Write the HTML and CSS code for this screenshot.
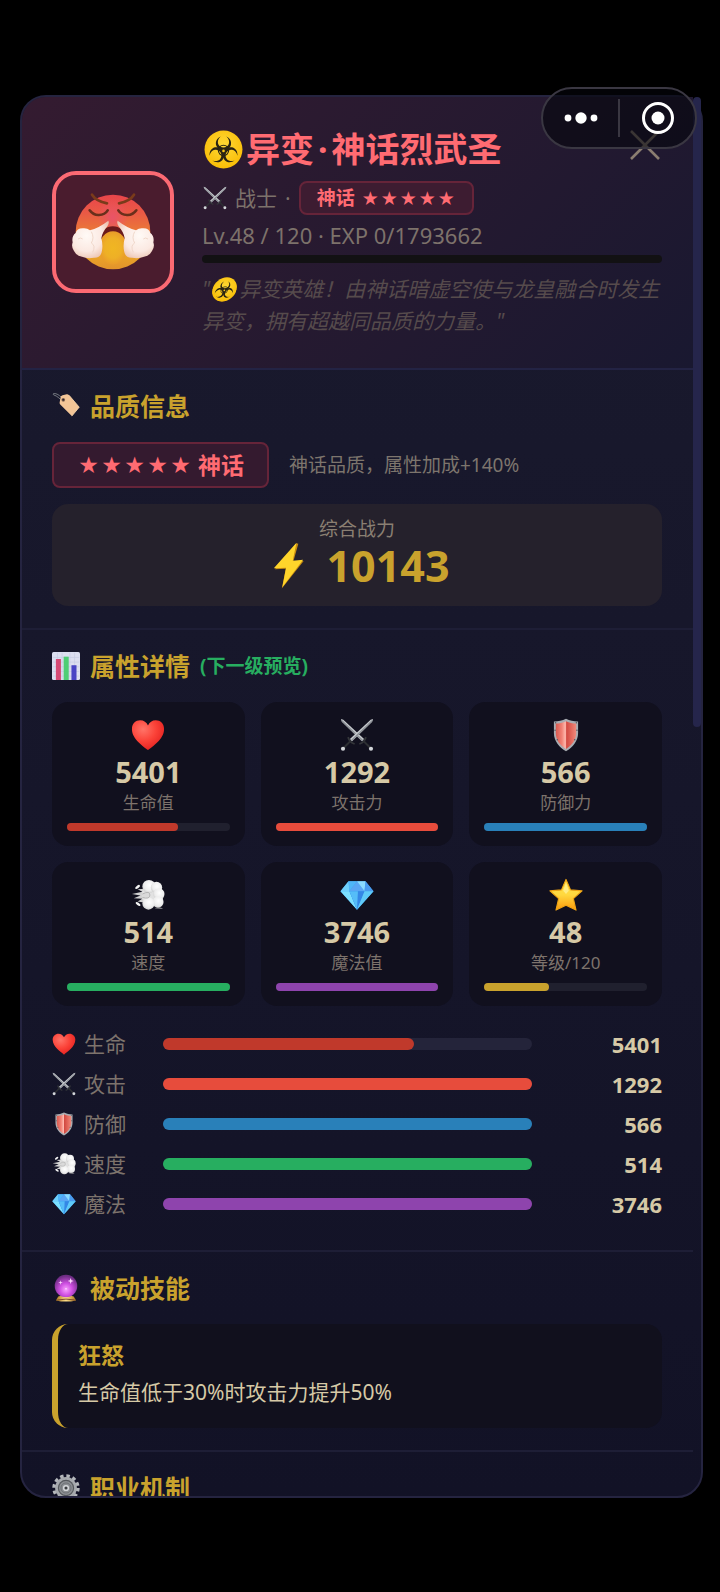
FILE: index.html
```html
<!DOCTYPE html>
<html lang="zh-CN">
<head>
  <meta charset="UTF-8">
  <meta name="viewport" content="width=device-width, initial-scale=1.0">
  <title>异变·神话烈武圣</title>
  <link rel="stylesheet" href="styles.css">
</head>
<body>
  <!-- icon sprites -->
  <svg class="sprites" aria-hidden="true">
    <defs>
      <radialGradient id="g-heart" cx="0.35" cy="0.3" r="0.8">
        <stop offset="0" stop-color="#ff7468"/><stop offset="0.5" stop-color="#fb4238"/><stop offset="1" stop-color="#e01c1c"/>
      </radialGradient>
      <linearGradient id="g-shield" x1="0" x2="1" y1="0" y2="0">
        <stop offset="0" stop-color="#d8594f"/><stop offset="0.3" stop-color="#f28377"/><stop offset="0.47" stop-color="#ffb9ae"/><stop offset="0.53" stop-color="#d24a42"/><stop offset="0.75" stop-color="#e2665a"/><stop offset="1" stop-color="#f08a7c"/>
      </linearGradient>
      <linearGradient id="g-star" x1="0" x2="0" y1="0" y2="1">
        <stop offset="0" stop-color="#ffe04a"/><stop offset="0.5" stop-color="#ffd83f"/><stop offset="1" stop-color="#fb9a0c"/>
      </linearGradient>
      <radialGradient id="g-cloud" cx="0.55" cy="0.4" r="0.6">
        <stop offset="0" stop-color="#ffffff"/><stop offset="0.7" stop-color="#ededed"/><stop offset="1" stop-color="#d2d2d2"/>
      </radialGradient>
      <radialGradient id="g-orb" cx="0.5" cy="0.65" r="0.6">
        <stop offset="0" stop-color="#f9a0ff"/><stop offset="0.45" stop-color="#cf4fe2"/><stop offset="1" stop-color="#6d2d83"/>
      </radialGradient>
      <radialGradient id="g-bio" cx="0.5" cy="0.4" r="0.6">
        <stop offset="0" stop-color="#ffd936"/><stop offset="1" stop-color="#f9bd07"/>
      </radialGradient>
      <linearGradient id="g-face" x1="0" x2="0" y1="0" y2="1">
        <stop offset="0" stop-color="#e8454b"/><stop offset="0.25" stop-color="#ea5a45"/><stop offset="0.55" stop-color="#ea8034"/><stop offset="0.8" stop-color="#eba527"/><stop offset="1" stop-color="#e2932c"/>
      </linearGradient>
      <radialGradient id="g-nose" cx="0.5" cy="0.5" r="0.5">
        <stop offset="0" stop-color="#ea5368"/><stop offset="1" stop-color="#ea5368" stop-opacity="0"/>
      </radialGradient>
      <radialGradient id="g-chin" cx="0.5" cy="0.5" r="0.5">
        <stop offset="0" stop-color="#f0b622"/><stop offset="0.6" stop-color="#eeb026"/><stop offset="1" stop-color="#e99b2a"/>
      </radialGradient>
      <radialGradient id="g-puff" cx="0.4" cy="0.4" r="0.7">
        <stop offset="0" stop-color="#fffaf6"/><stop offset="0.6" stop-color="#fbe9e2"/><stop offset="1" stop-color="#e9bda8"/>
      </radialGradient>
      <linearGradient id="g-gold" x1="0" x2="1" y1="0" y2="0">
        <stop offset="0" stop-color="#a8741c"/><stop offset="0.5" stop-color="#ffe08a"/><stop offset="1" stop-color="#a8741c"/>
      </linearGradient>
    </defs>
    <symbol id="i-heart" viewBox="0 0 36 36">
      <path d="M18 34C14 30.500 1 22.500 1 11.800C1 6 5 2.500 9.700 2.500C13.500 2.500 16.600 4.700 18 8C19.400 4.700 22.500 2.500 26.300 2.500C31 2.500 35 6 35 11.800C35 22.500 22 30.500 18 34Z" fill="url(#g-heart)"/>
    </symbol>
    <symbol id="i-swords" viewBox="0 0 36 36">
      <g id="sword">
        <path d="M1 1L3.500 1.800L25.500 22.300L23.300 24.600L2 4Z" fill="#c9ccd0"/>
        <path d="M1 1L24.400 23.400L23.300 24.600L2 4Z" fill="#8c9096"/>
        <path d="M20.500 27.500Q24.500 26 25 24.800Q26.500 23 27.500 20.200" fill="none" stroke="#34363a" stroke-width="1.900"/>
        <path d="M25 24.500L32 31.500" stroke="#2d2f33" stroke-width="2.200"/>
        <circle cx="32.800" cy="32.600" r="2.200" fill="#d3d6da"/>
      </g>
      <use href="#sword" transform="matrix(-1 0 0 1 36 0)"/>
    </symbol>
    <symbol id="i-shield" viewBox="0 0 36 36">
      <path d="M18 .8C22 2.600 26 3.600 30.800 3.600V16C30.800 24.500 25 31.500 18 35.200C11 31.500 5.200 24.500 5.200 16V3.600C10 3.600 14 2.600 18 .8Z" fill="#a9adb2"/>
      <path d="M18 3.400C21.500 5 25 5.800 28.800 5.900V16C28.800 23.400 24 29.500 18 32.800C12 29.500 7.200 23.400 7.200 16V5.900C11 5.800 14.500 5 18 3.400Z" fill="url(#g-shield)"/>
      <g fill="#55585d"><circle cx="7" cy="5" r=".8"/><circle cx="29" cy="5" r=".8"/><circle cx="6.400" cy="13" r=".8"/><circle cx="29.600" cy="13" r=".8"/><circle cx="8.800" cy="23" r=".8"/><circle cx="27.200" cy="23" r=".8"/></g>
    </symbol>
    <symbol id="i-dash" viewBox="0 0 36 36">
      <path d="M19 11L7 12L12 14.500L1 17L10 18.500L3 21.500L12 22L7 25L17 26.500Z" fill="#d2d2d2"/>
      <ellipse cx="7" cy="9.500" rx="3" ry="1.400" transform="rotate(-38 7 9.500)" fill="#f4f4f4"/>
      <ellipse cx="7.500" cy="27.500" rx="3" ry="1.400" transform="rotate(36 7.500 27.500)" fill="#f4f4f4"/>
      <circle cx="23" cy="18" r="11.500" fill="#e2e2e2"/>
      <g fill="url(#g-cloud)"><circle cx="19" cy="9" r="7"/><circle cx="27" cy="10" r="6"/><circle cx="29.500" cy="17" r="6"/><circle cx="28.500" cy="25.500" r="6"/><circle cx="18.500" cy="27" r="6.500"/></g>
      <path d="M12 17Q20 13 20 18Q20 23 12 20.500" fill="#dadada" stroke="#b3b3b3" stroke-width="1"/>
      <path d="M25 32Q30 30 34 32.500Z" fill="#b5b5b5"/>
    </symbol>
    <symbol id="i-gem" viewBox="0 0 36 36">
      <path d="M9 3.500H27L35.500 14L18 33.500L.5 14Z" fill="#3b9ff0"/>
      <path d="M9 3.500L.5 14H10Z" fill="#6fd0fb"/><path d="M9 3.500L10 14L18 3.500Z" fill="#4fb6f8"/><path d="M18 3.500L10 14H26Z" fill="#5aa6f4"/>
      <path d="M18 3.500L26 14L27 3.500Z" fill="#8bdcff"/><path d="M27 3.500L26 14H35.500Z" fill="#4a9bee"/>
      <path d="M.5 14H10L18 33.500Z" fill="#7be0ff"/><path d="M10 14H26L18 33.500Z" fill="#3487e6"/><path d="M10 14H19L18 33.500Z" fill="#55bdf8"/><path d="M26 14H35.500L18 33.500Z" fill="#5fcaf9"/>
    </symbol>
    <symbol id="i-star" viewBox="0 0 36 36">
      <path d="M18 1.500L22.800 12.600L35 13.700L25.800 21.800L28.600 34L18 28.800L7.400 34L10.200 21.800L1 13.700L13.200 12.600Z" fill="url(#g-star)" stroke="#f0a413" stroke-width="1.200" stroke-linejoin="round"/>
      <path d="M18 5L21 13.500L18 17L15 13.500Z" fill="#fff3a0" opacity=".7"/>
    </symbol>
    <symbol id="i-bolt" viewBox="0 0 36 36">
      <path d="M23.600 1L7.400 20.400L15.600 20L12.600 34.800L29 14.200L21.200 14.800L25 1.400Z" fill="#c58a12"/>
      <path d="M23.600 .6L6.600 19.600L15.800 19.400L13 34L28.600 13.400L20.800 14Z" fill="#ffd52b"/>
    </symbol>
    <symbol id="i-tag" viewBox="0 0 36 36">
      <path d="M13 11C9 8 7 5.500 2.500 3.800C0 2.600 2 1.400 5 2.200C9 3.400 11 6 14 9" fill="none" stroke="#7c8087" stroke-width="1.200"/>
      <path d="M11 7.500Q10.500 5 13.500 4.200L19 3Q20.500 2.800 22 4.300L35 19.500L25.500 31L10.600 16.200Q9.500 15 9.800 13.500Z" fill="#f3c597"/>
      <path d="M22 4.300L35 19.500L25.500 31" fill="none" stroke="#ffdcb2" stroke-width="1"/>
      <circle cx="14.500" cy="10" r="2.400" fill="#8d6b52"/><circle cx="14.500" cy="10" r="1.300" fill="#2b2430"/>
    </symbol>
    <symbol id="i-chart" viewBox="0 0 36 36">
      <rect x="0" y="0" width="36" height="36" rx="2" fill="#dcdff0"/>
      <path d="M1 7H35M1 13H35M1 19H35M1 25H35M1 31H35M7 1V35M13 1V35M23 1V35M29 1V35" stroke="#c5c9e2" stroke-width=".8"/>
      <rect x="5" y="9" width="6.500" height="27" fill="#d74a75"/><rect x="15" y="6" width="6.500" height="30" fill="#4fce75"/><rect x="25" y="17" width="6.500" height="19" fill="#4844c4"/>
    </symbol>
    <symbol id="i-orb" viewBox="0 0 36 36">
      <path d="M8 29Q18 25 28 29L31 34Q18 37 5 34Z" fill="url(#g-gold)"/>
      <path d="M7 33.500Q18 31 29 33.500" fill="none" stroke="#5c2b20" stroke-width="1"/>
      <circle cx="18" cy="15.500" r="14.500" fill="url(#g-orb)"/>
      <path d="M24 5L25 8L28 9L25 10L24 13L23 10L20 9L23 8ZM11 8L11.600 10.400L14 11L11.600 11.600L11 14L10.400 11.600L8 11L10.400 10.400Z" fill="#ffd9ff"/>
      <circle cx="18" cy="19" r="1" fill="#ffe3ff"/>
    </symbol>
    <symbol id="i-gear" viewBox="0 0 36 36">
      <circle cx="18" cy="18" r="15.300" fill="none" stroke="#b4b7bb" stroke-width="4.600" stroke-dasharray="4.400 3.611"/>
      <circle cx="18" cy="18" r="14" fill="#a7aaae"/>
      <circle cx="18" cy="18" r="10.500" fill="#55585c"/>
      <circle cx="18" cy="18" r="9" fill="#8b8e92"/>
      <circle cx="18" cy="18" r="6.500" fill="none" stroke="#6b6e72" stroke-width="1.200"/>
      <circle cx="18" cy="18" r="4" fill="#d4d6d9"/><circle cx="18" cy="18" r="2" fill="#3b3d41"/>
    </symbol>
    <symbol id="i-bio" viewBox="0 0 36 36">
      <circle cx="18" cy="18" r="17.500" fill="url(#g-bio)"/>
      <circle cx="18" cy="18.800" r="4.800" fill="none" stroke="#2a2413" stroke-width="1"/>
      <g fill="#2a2413">
        <path id="horn" d="M15.400 6C11.500 7.800 10.300 11.300 11.300 14.300C12.200 16.900 14.600 18.700 17.300 18.800L17.300 22H18.700L18.700 18.800C21.400 18.700 23.800 16.900 24.700 14.300C25.700 11.300 24.500 7.800 20.600 6C23.100 8.200 23.700 10.800 22.900 13C22.100 15.100 20.200 16.200 18 16.200C15.800 16.200 13.900 15.100 13.100 13C12.300 10.800 12.900 8.200 15.400 6Z"/>
        <use href="#horn" transform="rotate(120 18 19.300)"/>
        <use href="#horn" transform="rotate(240 18 19.300)"/>
      </g>
      <circle cx="18" cy="19.300" r="1.200" fill="#fcc917"/>
    </symbol>
    <symbol id="i-face" viewBox="215 333 252 252">
      <circle cx="341" cy="459" r="112" fill="url(#g-face)"/>
      <ellipse cx="340" cy="415" rx="46" ry="58" fill="url(#g-nose)"/>
      <path d="M300 482C302 428 379 428 381 482Z" fill="#6b1a1c"/>
      <ellipse cx="341" cy="507" rx="42" ry="50" fill="url(#g-chin)"/>
      <g id="side">
        <path d="M278 347Q290 366 323 373" fill="none" stroke="#7a3b1a" stroke-width="8" stroke-linecap="round"/>
        <path d="M271 394Q282 409 299 408Q317 407 325 394" fill="none" stroke="#6a2f1b" stroke-width="8" stroke-linecap="round"/>
        <path d="M327 425Q331 432 324 442Q308 461 306 478Q312 500 307 520Q303 537 284 536Q264 540 248 533Q230 530 224 516Q215 504 220 490Q216 472 229 462Q232 448 250 448Q262 446 272 454Q300 446 327 425Z" fill="url(#g-puff)"/>
        <path d="M276 458Q286 476 276 492Q290 500 280 520M236 480Q244 474 250 480" fill="none" stroke="#f0d8cb" stroke-width="3"/>
      </g>
      <use href="#side" transform="matrix(-1 0 0 1 682 0)"/>
    </symbol>
  </svg>

  <div class="modal">
    <div class="modal-content">
      <header class="hero-header">
        <div class="avatar"><svg class="avatar-icon"><use href="#i-face"/></svg></div>
        <div class="hero-info">
          <h1><svg class="icon-title"><use href="#i-bio"/></svg><span>异变<span class="dot">·</span>神话烈武圣</span></h1>
          <div class="hero-class">
            <svg class="icon-sm"><use href="#i-swords"/></svg>
            <span>战士</span>
            <span>·</span>
            <span class="badge badge-sm">神话 <span class="stars"><i>★</i><i>★</i><i>★</i><i>★</i><i>★</i></span></span>
          </div>
          <div class="hero-level">Lv.48 / 120 · EXP 0/1793662</div>
          <div class="exp-bar"></div>
          <p class="hero-desc">"<svg class="icon-desc"><use href="#i-bio"/></svg>异变英雄！由神话暗虚空使与龙皇融合时发生异变，拥有超越同品质的力量。"</p>
        </div>
      </header>

      <section class="section">
        <h2><svg class="icon-md"><use href="#i-tag"/></svg>品质信息</h2>
        <div class="quality-row">
          <span class="badge badge-lg"><span class="stars"><i>★</i><i>★</i><i>★</i><i>★</i><i>★</i></span> 神话</span>
          <span class="quality-text">神话品质，属性加成+140%</span>
        </div>
        <div class="power-box">
          <div class="power-label">综合战力</div>
          <div class="power-value"><svg class="icon-power"><use href="#i-bolt"/></svg>10143</div>
        </div>
      </section>

      <section class="section">
        <h2><svg class="icon-md"><use href="#i-chart"/></svg>属性详情 <span class="preview">(下一级预览)</span></h2>
        <div class="stat-grid">
          <div class="stat-card">
            <svg class="icon-lg"><use href="#i-heart"/></svg>
            <div class="stat-value">5401</div>
            <div class="stat-label">生命值</div>
            <div class="bar"><div class="fill hp" style="width: 68%"></div></div>
          </div>
          <div class="stat-card">
            <svg class="icon-lg"><use href="#i-swords"/></svg>
            <div class="stat-value">1292</div>
            <div class="stat-label">攻击力</div>
            <div class="bar"><div class="fill atk" style="width: 100%"></div></div>
          </div>
          <div class="stat-card">
            <svg class="icon-lg"><use href="#i-shield"/></svg>
            <div class="stat-value">566</div>
            <div class="stat-label">防御力</div>
            <div class="bar"><div class="fill def" style="width: 100%"></div></div>
          </div>
          <div class="stat-card">
            <svg class="icon-lg"><use href="#i-dash"/></svg>
            <div class="stat-value">514</div>
            <div class="stat-label">速度</div>
            <div class="bar"><div class="fill spd" style="width: 100%"></div></div>
          </div>
          <div class="stat-card">
            <svg class="icon-lg"><use href="#i-gem"/></svg>
            <div class="stat-value">3746</div>
            <div class="stat-label">魔法值</div>
            <div class="bar"><div class="fill mp" style="width: 100%"></div></div>
          </div>
          <div class="stat-card">
            <svg class="icon-lg"><use href="#i-star"/></svg>
            <div class="stat-value">48</div>
            <div class="stat-label">等级/120</div>
            <div class="bar"><div class="fill lvl" style="width: 40%"></div></div>
          </div>
        </div>
        <div class="stat-list">
          <div class="stat-row">
            <span class="row-label"><svg class="icon-sm"><use href="#i-heart"/></svg>生命</span>
            <div class="bar"><div class="fill hp" style="width: 68%"></div></div>
            <span class="row-value">5401</span>
          </div>
          <div class="stat-row">
            <span class="row-label"><svg class="icon-sm"><use href="#i-swords"/></svg>攻击</span>
            <div class="bar"><div class="fill atk" style="width: 100%"></div></div>
            <span class="row-value">1292</span>
          </div>
          <div class="stat-row">
            <span class="row-label"><svg class="icon-sm"><use href="#i-shield"/></svg>防御</span>
            <div class="bar"><div class="fill def" style="width: 100%"></div></div>
            <span class="row-value">566</span>
          </div>
          <div class="stat-row">
            <span class="row-label"><svg class="icon-sm"><use href="#i-dash"/></svg>速度</span>
            <div class="bar"><div class="fill spd" style="width: 100%"></div></div>
            <span class="row-value">514</span>
          </div>
          <div class="stat-row">
            <span class="row-label"><svg class="icon-sm"><use href="#i-gem"/></svg>魔法</span>
            <div class="bar"><div class="fill mp" style="width: 100%"></div></div>
            <span class="row-value">3746</span>
          </div>
        </div>
      </section>

      <section class="section">
        <h2><svg class="icon-md"><use href="#i-orb"/></svg>被动技能</h2>
        <div class="skill-card">
          <div class="skill-name">狂怒</div>
          <div class="skill-desc">生命值低于30%时攻击力提升50%</div>
        </div>
      </section>

      <section class="section">
        <h2><svg class="icon-md"><use href="#i-gear"/></svg>职业机制</h2>
      </section>
    </div>
    <div class="scroll-rail"><div class="scroll-thumb"></div></div>
    <button class="close-btn" aria-label="关闭">
      <svg viewBox="0 0 30 30"><path d="M1 1L29 29M29 1L1 29" stroke="#8a7d70" stroke-width="2.600"/></svg>
    </button>
  </div>

  <div class="capsule">
    <button aria-label="更多">
      <svg width="34" height="34" viewBox="0 0 34 34" fill="#fff"><circle cx="4" cy="17" r="3.400"/><circle cx="17" cy="17" r="5.700"/><circle cx="30" cy="17" r="3.400"/></svg>
    </button>
    <button aria-label="退出">
      <svg width="34" height="34" viewBox="0 0 34 34"><circle cx="17" cy="17" r="14.500" fill="none" stroke="#fff" stroke-width="3"/><circle cx="17" cy="17" r="6.500" fill="#fff"/></svg>
    </button>
  </div>
</body>
</html>
```
FILE: styles.css
```css
* {
  box-sizing: border-box;
}
body {
  margin: 0;
  height: 100vh;
  padding: 95px 17px 94px 20px;
  background-color: #000;
  color: #d6c9a6;
  font-family: 'Noto Sans', 'Noto Sans CJK SC', sans-serif;
  font-size: 21px;
  line-height: 24px;
  overflow: hidden;
}
.sprites {
  position: absolute;
  width: 0;
  height: 0;
}
h1, h2, p {
  margin: 0;
}
svg {
  flex-shrink: 0;
}
.modal {
  position: relative;
  display: flex;
  height: 100%;
  border: 2px solid #252440;
  border-radius: 26px;
  background: linear-gradient(180deg, #1a1a2e, #121226);
}
.modal-content {
  flex: 1;
  min-width: 0;
  overflow: hidden;
  border-radius: 24px 0 0 24px;
}
.scroll-rail {
  width: 8px;
}
.scroll-thumb {
  height: 45%;
  border-radius: 4px;
  background-color: #25254b;
}
.close-btn {
  position: absolute;
  top: 33px;
  right: 41px;
  width: 30px;
  height: 30px;
  padding: 0;
  border: none;
  background: none;
  cursor: pointer;
}
.close-btn svg {
  display: block;
}

/* mini program capsule */
.capsule {
  position: absolute;
  top: 87px;
  right: 23px;
  display: flex;
  width: 156px;
  height: 62px;
  border: 2px solid #3a3742;
  border-radius: 31px;
  background-color: rgba(5, 5, 12, 0.6);
}
.capsule button {
  display: flex;
  flex: 1;
  align-items: center;
  justify-content: center;
  margin: 10px 0;
  padding: 0;
  border: none;
  background: none;
  cursor: pointer;
}
.capsule button + button {
  border-left: 2px solid #3a3742;
}

/* header */
.hero-header {
  display: flex;
  align-items: center;
  gap: 28px;
  padding: 30px 31px 31px 30px;
  border-bottom: 2px solid #232344;
  background: linear-gradient(135deg, #341b30, #191830);
}
.avatar {
  display: flex;
  align-items: center;
  justify-content: center;
  flex-shrink: 0;
  width: 122px;
  height: 122px;
  border: 4px solid #fb6a73;
  border-radius: 24px;
  background-color: #4a1c2e;
}
.avatar-icon {
  width: 84px;
  height: 84px;
}
.hero-info {
  flex: 1;
  min-width: 0;
}
h1 {
  display: flex;
  align-items: center;
  gap: 3px;
  padding-left: 2px;
  font-size: 34px;
  line-height: 44px;
  color: #ff6b72;
}
.dot {
  margin: 0 4px;
}
.icon-title {
  width: 39px;
  height: 39px;
}
.icon-desc {
  width: 25px;
  height: 25px;
  margin: 0 2px;
  vertical-align: -5px;
  transform: skewX(-12deg);
}
.icon-sm {
  width: 24px;
  height: 24px;
}
.icon-md {
  width: 28px;
  height: 28px;
}
.icon-lg {
  width: 34px;
  height: 34px;
  margin: 1px 0;
}
.icon-power {
  width: 48px;
  height: 48px;
}
.hero-class {
  display: flex;
  align-items: center;
  gap: 8px;
  margin-top: 10px;
  padding-left: 1px;
  color: #7d726b;
}
.badge {
  display: flex;
  align-items: center;
  gap: 6px;
  border: 2px solid #662439;
  border-radius: 8px;
  background-color: #3d1c31;
  color: #ff6b72;
  font-weight: bold;
}
.stars {
  display: flex;
  font-family: 'DejaVu Sans', sans-serif;
}
.stars i {
  font-style: normal;
  font-weight: normal;
  text-align: center;
}
.badge-sm {
  height: 34px;
  padding: 0 16px;
  font-size: 19px;
}
.badge-sm i {
  width: 19px;
  font-size: 19px;
}
.badge-lg {
  height: 46px;
  padding: 0 23px;
  background-color: #341a2f;
  font-size: 23px;
}
.badge-lg i {
  width: 23px;
  font-size: 23px;
}
.hero-level {
  margin: 4px 0;
  font-size: 22px;
  line-height: 32px;
  color: #7d726b;
}
.exp-bar {
  height: 8px;
  border-radius: 4px;
  background-color: #121113;
}
.hero-desc {
  margin-top: 10px;
  line-height: 32px;
  font-style: italic;
  color: #564b4c;
}

/* sections */
.section {
  padding: 22px 31px 22px 30px;
  border-bottom: 2px solid #1e1e36;
}
h2 {
  display: flex;
  align-items: center;
  gap: 10px;
  margin-bottom: 22px;
  font-size: 25px;
  line-height: 28px;
  color: #c9a22d;
}
.preview {
  font-size: 19px;
  color: #27ae60;
}
.quality-row {
  display: flex;
  align-items: center;
  gap: 20px;
  margin-bottom: 16px;
}
.quality-text {
  font-size: 19px;
  color: #7d756d;
}
.power-box {
  padding: 14px;
  border-radius: 16px;
  background-color: #25212c;
  text-align: center;
}
.power-label {
  font-size: 19px;
  line-height: 22px;
  color: #8a7f72;
}
.power-value {
  display: flex;
  align-items: center;
  justify-content: center;
  gap: 14px;
  font-size: 43px;
  font-weight: bold;
  line-height: 52px;
  color: #c9a22d;
}

/* stats */
.stat-grid {
  display: grid;
  grid-template-columns: repeat(3, 1fr);
  gap: 16px;
}
.stat-card {
  display: flex;
  flex-direction: column;
  align-items: center;
  padding: 15px;
  border-radius: 16px;
  background-color: #11101e;
}
.stat-value {
  font-size: 29px;
  font-weight: bold;
  line-height: 38px;
}
.stat-label {
  margin-bottom: 8px;
  font-size: 17px;
  line-height: 24px;
  color: #7d736c;
}
.bar {
  width: 100%;
  height: 8px;
  border-radius: 6px;
  background-color: #24243a;
}
.stat-card .bar {
  background-color: #20202e;
}
.fill {
  height: 100%;
  border-radius: 6px;
}
.hp {
  background-color: #c0392b;
}
.atk {
  background-color: #e74c3c;
}
.def {
  background-color: #2980b9;
}
.spd {
  background-color: #27ae60;
}
.mp {
  background-color: #8e44ad;
}
.lvl {
  background-color: #c9a22d;
}
.stat-list {
  margin-top: 22px;
}
.stat-row {
  display: grid;
  grid-template-columns: 95px 1fr 114px;
  gap: 16px;
  align-items: center;
  height: 32px;
  margin-bottom: 8px;
}
.stat-row .bar {
  height: 12px;
}
.row-label {
  display: flex;
  align-items: center;
  gap: 8px;
  color: #7d736c;
}
.row-value {
  font-size: 22px;
  font-weight: bold;
  text-align: right;
}

/* skills */
.skill-card {
  padding: 16px 20px 20px;
  border-left: 6px solid #c9a22d;
  border-radius: 16px;
  background-color: #11101d;
}
.skill-name {
  font-size: 23px;
  font-weight: bold;
  line-height: 30px;
  color: #c9a22d;
}
.skill-desc {
  margin-top: 6px;
  line-height: 32px;
}
```
